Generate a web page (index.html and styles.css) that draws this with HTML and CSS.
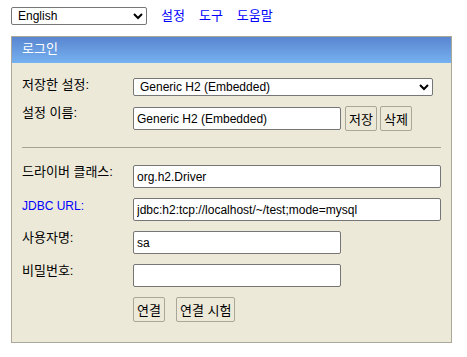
FILE: index.html
```html
<!DOCTYPE html>
<html lang="ko">
<head>
    <meta charset="UTF-8">
    <title>H2 Console</title>
    <link rel="stylesheet" href="styles.css">
</head>
<body>
    <div class="toolbar">
        <select class="lang-select">
            <option>English</option>
            <option>한국어</option>
        </select>
        <a class="top-link" href="#">설정</a>
        <a class="top-link" href="#">도구</a>
        <a class="top-link" href="#">도움말</a>
    </div>

    <div class="login">
        <div class="login-head">로그인</div>
        <form class="login-form">
            <div class="label">저장한 설정:</div>
            <select class="field wide-select">
                <option>Generic H2 (Embedded)</option>
            </select>

            <div class="label">설정 이름:</div>
            <div class="inline-row">
                <input class="field narrow" type="text" value="Generic H2 (Embedded)">
                <button class="btn" type="button">저장</button>
                <button class="btn" type="button">삭제</button>
            </div>

            <div class="divider"><hr></div>

            <div class="label">드라이버 클래스:</div>
            <input class="field wide" type="text" value="org.h2.Driver">

            <a class="label label-link" href="#">JDBC URL:</a>
            <input class="field wide" type="text" value="jdbc:h2:tcp://localhost/~/test;mode=mysql">

            <div class="label">사용자명:</div>
            <input class="field narrow" type="text" value="sa">

            <div class="label">비밀번호:</div>
            <input class="field narrow" type="password" value="">

            <div></div>
            <div class="actions">
                <button class="btn" type="button">연결</button>
                <button class="btn" type="button">연결 시험</button>
            </div>
        </form>
    </div>
</body>
</html>
```

FILE: styles.css
```css
/* hangul text at 13px, latin values at 12px */
body {
    margin: 0;
    padding: 7px 11px;
    font-family: "Liberation Sans", "Noto Sans CJK KR", sans-serif;
    font-size: 13px;
    color: #000;
    background: #fff;
}

.toolbar {
    display: flex;
    align-items: center;
    gap: 14px;
    height: 18px;
}
.lang-select {
    width: 136px;
    height: 18px;
    font: 12px "Liberation Sans", "Noto Sans CJK KR", sans-serif;
    border: 1px solid #767676;
    border-radius: 2px;
    background: #fff;
    padding: 0 0 0 2px;
}
.top-link {
    color: #0000ff;
    text-decoration: none;
    line-height: 14px;
}

.login {
    width: 439px;
    margin-top: 11px;
    border: 1px solid #aca899;
    background: #ece9d8;
}
.login-head {
    height: 26px;
    line-height: 24px;
    padding: 0 10px;
    color: #fff;
    background: linear-gradient(#5986cf, #76b1f1);
}

.login-form {
    display: grid;
    grid-template-columns: 111px 308px;
    row-gap: 10px;
    padding: 15px 10px 20px;
    margin: 0;
}
.label {
    align-self: start;
    line-height: 14px;
    color: #000;
}
.label-link {
    font-size: 12px;
    padding-top: 1px;
    color: #0000ff;
    text-decoration: none;
}

.field {
    box-sizing: border-box;
    height: 23px;
    margin: 0;
    padding: 0 3px;
    font: 12px "Liberation Sans", "Noto Sans CJK KR", sans-serif;
    color: #000;
    background: #fff;
    border: 1px solid #767676;
    border-radius: 2px;
}
.wide-select {
    width: 300px;
    height: 18px;
    padding: 0 0 0 2px;
}
.wide { width: 308px; }
.narrow { width: 208px; }

.inline-row {
    display: flex;
    align-items: center;
    height: 25px;
}
.inline-row .narrow { margin-right: 4px; }
.inline-row .btn + .btn { margin-left: 3px; }

.btn {
    box-sizing: border-box;
    height: 25px;
    padding: 0 3px;
    font: 13px "Liberation Sans", "Noto Sans CJK KR", sans-serif;
    color: #000;
    background: #ece9d8;
    border: 1px solid #aaa69a;
    border-radius: 2px;
}

.divider {
    grid-column: 1 / 3;
    height: 14px;
}
.divider hr {
    margin: 6px 0 0;
    height: 0;
    border: 0;
    border-top: 1px solid #a7a497;
}

.actions {
    display: flex;
    gap: 11px;
}
```
